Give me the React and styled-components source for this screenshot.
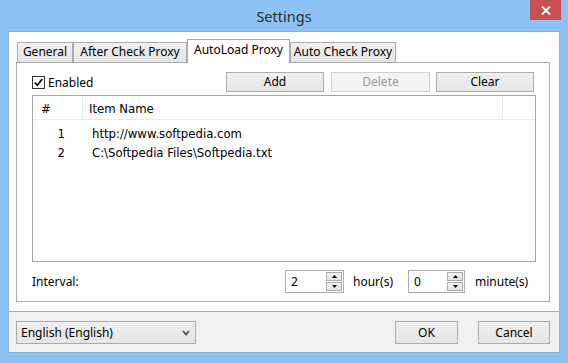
import React from 'react';
import styled, { createGlobalStyle } from 'styled-components';

const Global = createGlobalStyle`
  html, body { margin: 0; padding: 0; }
  body {
    width: 568px; height: 363px; overflow: hidden;
    background: #8cc3f4;
    font-family: "Noto Sans", "Open Sans", sans-serif;
  }
  * { box-sizing: border-box; }
`;

const Window = styled.div`
  width: 568px;
  height: 363px;
  background: #8cc3f4;
  display: flex;
  flex-direction: column;
`;

const TitleBar = styled.div`
  height: 31px;
  flex: none;
  display: grid;
  grid-template-columns: 1fr auto 1fr;
`;

const Title = styled.div`
  grid-column: 2;
  align-self: center;
  font-size: 14.5px;
  color: #2b2b2b;
  line-height: 1;
  padding-top: 1px;
`;

const CloseButton = styled.div`
  grid-column: 3;
  justify-self: end;
  align-self: start;
  margin-right: 7px;
  width: 31px;
  height: 20px;
  background: #c75050;
  display: flex;
  align-items: center;
  justify-content: center;
`;

const Client = styled.div`
  flex: 1;
  margin: 0 8px 10px;
  border: 1px solid #90b3d6;
  background: #fff;
  display: flex;
  flex-direction: column;
`;

const TopArea = styled.div`
  padding: 7px 9px 9px 7px;
  background: #fff;
`;

const TabStrip = styled.div`
  display: flex;
  align-items: flex-end;
  height: 23px;
  padding-left: 1px;
`;

const Tab = styled.div`
  width: ${p => p.$w}px;
  height: 20px;
  border: 1px solid #acacac;
  border-bottom: none;
  background: linear-gradient(#f0f0f0, #e5e5e5);
  font-size: 12px;
  color: #000;
  display: flex;
  align-items: center;
  justify-content: center;
  white-space: nowrap;
  line-height: 1;
  padding-bottom: 1px;
`;

const ActiveTab = styled(Tab)`
  height: 24px;
  margin-bottom: -1px;
  background: #fff;
  position: relative;
  z-index: 1;
  padding-bottom: 4px;
`;

const Panel = styled.div`
  height: 240px;
  border: 1px solid #acacac;
  background: #fff;
  padding: 9px 13px 8px 15px;
  display: flex;
  flex-direction: column;
`;

const TopRow = styled.div`
  display: flex;
  align-items: center;
  height: 20px;
  margin-right: 2px;
`;

const CheckLabel = styled.label`
  flex: 1;
  display: flex;
  align-items: center;
  gap: 3px;
  font-size: 12px;
  color: #000;
`;

const CheckBox = styled.span`
  width: 13px;
  height: 13px;
  border: 1px solid #333;
  background: #fff;
  display: flex;
`;

const Button = styled.button`
  width: ${p => p.$w}px;
  height: ${p => p.$h || 20}px;
  margin: 0 0 0 ${p => p.$ml || 0}px;
  padding: 0;
  border: 1px solid ${p => (p.disabled ? '#cfcfcf' : '#acacac')};
  background: ${p => (p.disabled ? '#f4f4f4' : 'linear-gradient(#f0f0f0, #e5e5e5)')};
  color: ${p => (p.disabled ? '#9b9b9b' : '#000')};
  font-family: "Noto Sans", "Open Sans", sans-serif;
  font-size: 12px;
  line-height: 1;
`;

const ListBox = styled.div`
  margin-top: 3px;
  height: 167px;
  border: 1px solid #a5a5a5;
  background: #fff;
  font-family: "DejaVu Sans", Verdana, sans-serif;
  font-size: 11.7px;
  color: #000;
`;

const HeaderRow = styled.div`
  display: grid;
  grid-template-columns: 50px 420px 1fr;
  height: 24px;
  border-bottom: 1px solid #e8ebef;
`;

const HeaderCell = styled.div`
  border-right: 1px solid #e8ebef;
  padding: 2px 0 0 ${p => p.$pl || 0}px;
  display: flex;
  align-items: center;
  &:last-child { border-right: none; }
`;

const ListBody = styled.div`
  padding-top: 4px;
`;

const Row = styled.div`
  display: grid;
  grid-template-columns: 50px 1fr;
  height: 19px;
  align-items: center;
`;

const NumCell = styled.div`
  text-align: right;
  padding-right: 18px;
`;

const ItemCell = styled.div`
  padding-left: 9px;
  white-space: nowrap;
`;

const IntervalRow = styled.div`
  margin-top: 8px;
  height: 23px;
  display: flex;
  align-items: center;
  font-size: 12px;
  color: #000;
`;

const IntervalLabel = styled.span`
  width: 253px;
`;

const Unit = styled.span`
  width: ${p => p.$w}px;
  margin-left: ${p => p.$ml}px;
  white-space: nowrap;
`;

const Spin = styled.div`
  width: ${p => p.$w}px;
  height: 23px;
  border: 1px solid #abadb3;
  background: #fff;
  display: flex;
  align-items: stretch;
`;

const SpinValue = styled.span`
  flex: 1;
  padding-left: 5px;
  display: flex;
  align-items: center;
  font-size: 12px;
`;

const SpinButtons = styled.div`
  width: 17px;
  padding: 1px 1px 1px 0;
  display: flex;
  flex-direction: column;
  gap: 1px;
`;

const SpinBtn = styled.div`
  flex: 1;
  border: 1px solid #acacac;
  background: linear-gradient(#f2f2f2, #e3e3e3);
  display: flex;
  align-items: center;
  justify-content: center;
`;

const Footer = styled.div`
  flex: 1;
  border-top: 1px solid #a9a9a9;
  background: #f0f0f0;
  padding: 9px 9px 0 7px;
  display: flex;
  justify-content: space-between;
  align-items: flex-start;
`;

const Select = styled.div`
  width: 180px;
  height: 23px;
  border: 1px solid #acacac;
  background: linear-gradient(#f0f0f0, #e5e5e5);
  padding: 0 5px 0 4px;
  display: flex;
  align-items: center;
  justify-content: space-between;
  font-size: 12px;
  color: #000;
`;

const ButtonGroup = styled.div`
  display: flex;
  gap: 20px;
`;

const Arrow = ({ down }) => (
  <svg width="5" height="3" viewBox="0 0 5 3">
    <path d={down ? 'M0 0 H5 L2.5 3 Z' : 'M0 3 H5 L2.5 0 Z'} fill="#000" />
  </svg>
);

const rows = [
  ['1', 'http://www.softpedia.com'],
  ['2', 'C:\\Softpedia Files\\Softpedia.txt'],
];

export default function App() {
  return (
    <>
      <Global />
      <Window>
        <TitleBar>
          <Title>Settings</Title>
          <CloseButton>
            <svg width="10" height="9" viewBox="0 0 10 9">
              <path d="M1 0.5 L9 8.5 M9 0.5 L1 8.5" stroke="#fff" strokeWidth="2" />
            </svg>
          </CloseButton>
        </TitleBar>
        <Client>
          <TopArea>
            <TabStrip>
              <Tab $w={56}>General</Tab>
              <Tab $w={114}>After Check Proxy</Tab>
              <ActiveTab $w={103}>AutoLoad Proxy</ActiveTab>
              <Tab $w={106}>Auto Check Proxy</Tab>
            </TabStrip>
            <Panel>
              <TopRow>
                <CheckLabel>
                  <CheckBox>
                    <svg width="11" height="11" viewBox="0 0 11 11">
                      <path d="M1.8 5.6 L4.3 8.2 L9.3 2" stroke="#000" strokeWidth="1.7" fill="none" />
                    </svg>
                  </CheckBox>
                  Enabled
                </CheckLabel>
                <Button $w={98}>Add</Button>
                <Button $w={99} $ml={7} disabled>Delete</Button>
                <Button $w={98} $ml={6}>Clear</Button>
              </TopRow>
              <ListBox>
                <HeaderRow>
                  <HeaderCell $pl={8}>#</HeaderCell>
                  <HeaderCell $pl={6}>Item Name</HeaderCell>
                  <HeaderCell />
                </HeaderRow>
                <ListBody>
                  {rows.map(([n, t]) => (
                    <Row key={n}>
                      <NumCell>{n}</NumCell>
                      <ItemCell>{t}</ItemCell>
                    </Row>
                  ))}
                </ListBody>
              </ListBox>
              <IntervalRow>
                <IntervalLabel>Interval:</IntervalLabel>
                <Spin $w={59}>
                  <SpinValue>2</SpinValue>
                  <SpinButtons>
                    <SpinBtn><Arrow /></SpinBtn>
                    <SpinBtn><Arrow down /></SpinBtn>
                  </SpinButtons>
                </Spin>
                <Unit $w={55} $ml={9}>hour(s)</Unit>
                <Spin $w={57}>
                  <SpinValue>0</SpinValue>
                  <SpinButtons>
                    <SpinBtn><Arrow /></SpinBtn>
                    <SpinBtn><Arrow down /></SpinBtn>
                  </SpinButtons>
                </Spin>
                <Unit $w={60} $ml={10}>minute(s)</Unit>
              </IntervalRow>
            </Panel>
          </TopArea>
          <Footer>
            <Select>
              <span>English (English)</span>
              <svg width="8" height="6" viewBox="0 0 8 6">
                <path d="M1 1 L4 4.5 L7 1" stroke="#555" strokeWidth="1.8" fill="none" />
              </svg>
            </Select>
            <ButtonGroup>
              <Button $w={63} $h={23}>OK</Button>
              <Button $w={72} $h={23}>Cancel</Button>
            </ButtonGroup>
          </Footer>
        </Client>
      </Window>
    </>
  );
}
